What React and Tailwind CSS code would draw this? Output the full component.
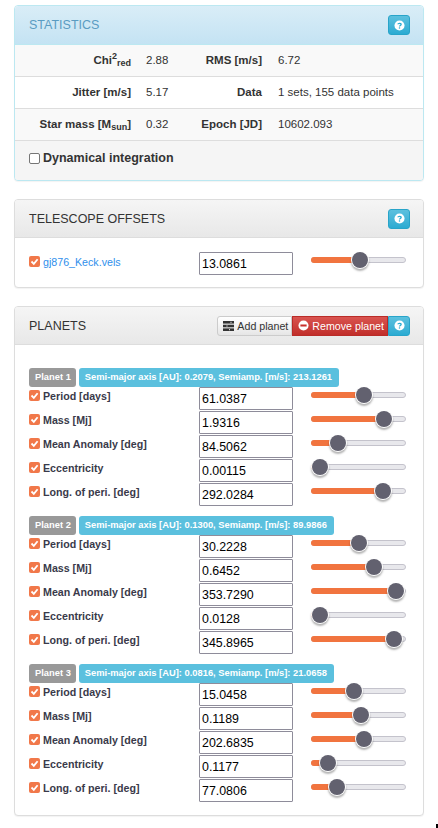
const planets = [
  {
    name: "Planet 1",
    info: "Semi-major axis [AU]: 0.2079, Semiamp. [m/s]: 213.1261",
    rows: [
      ["Period [days]", "61.0387", 53],
      ["Mass [Mj]", "1.9316", 73],
      ["Mean Anomaly [deg]", "84.5062", 27],
      ["Eccentricity", "0.00115", 9],
      ["Long. of peri. [deg]", "292.0284", 72],
    ],
  },
  {
    name: "Planet 2",
    info: "Semi-major axis [AU]: 0.1300, Semiamp. [m/s]: 89.9866",
    rows: [
      ["Period [days]", "30.2228", 48],
      ["Mass [Mj]", "0.6452", 63],
      ["Mean Anomaly [deg]", "353.7290", 85],
      ["Eccentricity", "0.0128", 9],
      ["Long. of peri. [deg]", "345.8965", 83],
    ],
  },
  {
    name: "Planet 3",
    info: "Semi-major axis [AU]: 0.0816, Semiamp. [m/s]: 21.0658",
    rows: [
      ["Period [days]", "15.0458", 43],
      ["Mass [Mj]", "0.1189", 50],
      ["Mean Anomaly [deg]", "202.6835", 53],
      ["Eccentricity", "0.1177", 17],
      ["Long. of peri. [deg]", "77.0806", 26],
    ],
  },
];

function Check() {
  return (
    <span className="flex h-[11px] w-[11px] shrink-0 items-center justify-center rounded-[2px] bg-[#f1784a]">
      <svg viewBox="0 0 11 11" className="h-[11px] w-[11px]" fill="none" stroke="#fff" strokeWidth="1.8">
        <path d="M2.5 5.5 L4.8 7.8 L8.6 3.2" />
      </svg>
    </span>
  );
}

function Slider({ thumb }) {
  return (
    <div className="relative h-[6px] w-[95px] rounded-[3px] border border-[#c4c3cc] bg-[#e8e8ec]">
      <div className="absolute -top-px -left-px h-[6px] rounded-l-[3px] bg-[#f1743f]" style={{ width: thumb + "px" }} />
      <div
        className="absolute top-[-6px] h-[16px] w-[16px] rounded-full bg-[#62616f] shadow-[0_2px_2px_1px_rgba(0,0,0,0.3)] ring-1 ring-white"
        style={{ left: thumb - 9 + "px" }}
      />
    </div>
  );
}

function NumBox({ value }) {
  return (
    <div className="flex h-[23px] w-[94px] shrink-0 items-center rounded-[1px] border border-[#8e8c9a] bg-white pt-[2px] pl-[2px] text-[12.4px] text-black">
      {value}
    </div>
  );
}

function Heading({ title, children, blue }) {
  return (
    <div
      className={
        blue
          ? "flex items-center justify-between rounded-t-[3px] border-b border-[#bce8f1] bg-gradient-to-b from-[#d9edf7] to-[#c4e3f3] pr-[13px] pl-[14px]"
          : "flex items-center justify-between rounded-t-[3px] border-b border-[#ddd] bg-gradient-to-b from-[#f5f5f5] to-[#e8e8e8] pr-[13px] pl-[14px]"
      }
    >
      <span className={blue ? "text-[12.5px] text-[#5a9cc2]" : "pt-[1px] text-[12.5px] text-[#333]"}>{title}</span>
      {children}
    </div>
  );
}

function Help({ group }) {
  return (
    <span
      className={
        (group ? "rounded-r-[3px]" : "rounded-[3px]") +
        " flex h-[20px] w-[22px] items-center justify-center border border-[#28a4c9] bg-gradient-to-b from-[#5bc0de] to-[#2aabd2]"
      }
    >
      <svg viewBox="0 0 12 12" className="h-[11px] w-[11px]">
        <circle cx="6" cy="6" r="5.5" fill="#fff" />
        <path d="M4.2 4.7 C4.3 3.4 7.8 3.1 7.8 4.9 C7.8 6 6 6 6 7.2" fill="none" stroke="#2aabd2" strokeWidth="1.4" />
        <rect x="5.3" y="8" width="1.4" height="1.4" fill="#2aabd2" />
      </svg>
    </span>
  );
}

function StatRow({ bg, l1, v1, l2, v2 }) {
  return (
    <div className={"flex h-[32px] items-center border-b border-[#ddd] text-[11.5px] " + bg}>
      <div className="w-[116px] text-right text-[11.5px] font-bold text-[#333]">{l1}</div>
      <div className="w-[15px]" />
      <div className="w-[47px] text-[#333]">{v1}</div>
      <div className="w-[69px] text-right text-[11.5px] font-bold text-[#333]">{l2}</div>
      <div className="w-[16px]" />
      <div className="text-[#333]">{v2}</div>
    </div>
  );
}

export default function App() {
  return (
    <div className="relative flex h-[828px] flex-col gap-[18px] overflow-hidden bg-white pt-[5px] pr-[14px] pl-[14px] font-['Liberation_Sans',sans-serif]">
      <div className="h-[176px] overflow-hidden rounded-[4px] border border-[#bce8f1] bg-white shadow-[0_1px_1px_rgba(0,0,0,0.05)]">
        <div className="h-[39px]">
          <Heading title="STATISTICS" blue>
            <span className="flex h-[38px] items-center">
              <Help />
            </span>
          </Heading>
        </div>
        <StatRow
          bg="bg-[#f9f9f9]"
          l1={
            <>
              Chi<sup className="text-[9px]">2</sup>
              <sub className="text-[9px]">red</sub>
            </>
          }
          v1="2.88"
          l2="RMS [m/s]"
          v2="6.72"
        />
        <StatRow bg="bg-white" l1="Jitter [m/s]" v1="5.17" l2="Data" v2="1 sets, 155 data points" />
        <StatRow
          bg="bg-[#f9f9f9]"
          l1={
            <>
              Star mass [M<sub className="text-[9px]">sun</sub>]
            </>
          }
          v1="0.32"
          l2="Epoch [JD]"
          v2="10602.093"
        />
        <div className="flex h-[41px] items-center gap-[3px] bg-[#f5f5f5] pb-[6px] pl-[14px]">
          <span className="h-[11px] w-[11px] rounded-[2px] border border-[#767676] bg-white" />
          <span className="text-[12.5px] font-bold text-[#333]">Dynamical integration</span>
        </div>
      </div>

      <div className="h-[89px] rounded-[4px] border border-[#ddd] bg-white shadow-[0_1px_1px_rgba(0,0,0,0.05)]">
        <Heading title="TELESCOPE OFFSETS">
          <span className="flex h-[37px] items-center">
            <Help />
          </span>
        </Heading>
        <div className="flex pt-[14px] pl-[14px]">
          <div className="flex w-[170px] items-start gap-[3px] pt-[4px]">
            <Check />
            <span className="text-[10.67px] leading-[12px] text-[#2f8fec]">gj876_Keck.vels</span>
          </div>
          <NumBox value="13.0861" />
          <div className="pt-[5px] pl-[18px]">
            <Slider thumb={49} />
          </div>
        </div>
      </div>

      <div className="h-[510px] rounded-[4px] border border-[#ddd] bg-white shadow-[0_1px_1px_rgba(0,0,0,0.05)]">
        <Heading title="PLANETS">
          <span className="flex h-[37px] items-center">
            <span className="flex h-[20px] items-center gap-[3px] rounded-l-[3px] border border-[#ccc] bg-gradient-to-b from-white to-[#e6e6e6] pr-[3px] pl-[5px] text-[10.67px] text-[#333]">
              <svg viewBox="0 0 11 10" className="h-[10px] w-[11px]">
                <rect x="0" y="0" width="11" height="2.6" fill="#333" />
                <rect x="0" y="3.7" width="11" height="2.6" fill="#333" />
                <rect x="0" y="7.4" width="11" height="2.6" fill="#333" />
                <rect x="7.5" y="0.8" width="1" height="1" fill="#fff" />
                <rect x="3.5" y="4.5" width="1" height="1" fill="#fff" />
                <rect x="6" y="8.2" width="1" height="1" fill="#fff" />
              </svg>
              Add planet
            </span>
            <span className="flex h-[20px] items-center gap-[3px] border border-[#b92c28] bg-gradient-to-b from-[#d9534f] to-[#c12e2a] pr-[3px] pl-[5px] text-[10.67px] text-white">
              <svg viewBox="0 0 12 12" className="h-[11px] w-[11px]">
                <circle cx="6" cy="6" r="5.5" fill="#fff" />
                <rect x="2.6" y="4.9" width="6.8" height="2.2" fill="#c9302c" />
              </svg>
              Remove planet
            </span>
            <Help group />
          </span>
        </Heading>
        <div className="flex flex-col gap-[10px] pt-[23px] pl-[14px]">
          {planets.map((p) => (
            <div key={p.name}>
              <div className="flex h-[19px] gap-[3px]">
                <span className="flex items-center rounded-[3px] bg-[#999] pr-[5px] pl-[6px] text-[9.36px] font-bold text-white">{p.name}</span>
                <span className="flex items-center rounded-[3px] bg-[#5bc0de] pr-[7px] pl-[6px] text-[9.36px] font-bold text-white">{p.info}</span>
              </div>
              <div className="flex flex-col gap-[1px]">
                {p.rows.map(([label, value, thumb]) => (
                  <div key={label} className="flex h-[23px]">
                    <div className="flex w-[170px] items-start gap-[3px] pt-[3px]">
                      <Check />
                      <span className="text-[10.67px] leading-[12px] font-bold text-[#3a3a4a]">{label}</span>
                    </div>
                    <NumBox value={value} />
                    <div className="pt-[5px] pl-[18px]">
                      <Slider thumb={thumb} />
                    </div>
                  </div>
                ))}
              </div>
            </div>
          ))}
        </div>
      </div>
      <span className="absolute right-0 bottom-0 h-[4px] w-[2px] bg-black" />
    </div>
  );
}
